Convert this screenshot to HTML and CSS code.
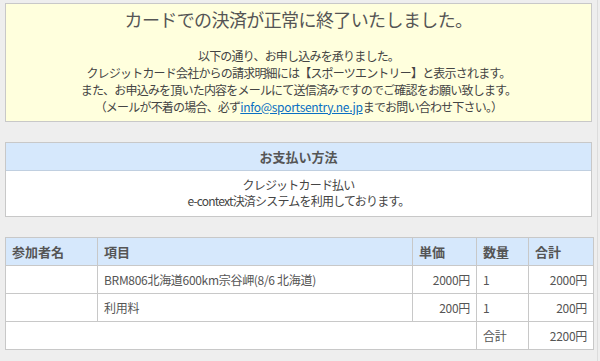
FILE: index.html
```html
<!DOCTYPE html>
<html lang="ja">
<head>
<meta charset="UTF-8">
<title>決済完了</title>
<link rel="stylesheet" href="styles.css">
</head>
<body>
<div class="page">
    <div class="notice">
        <h1>カードでの決済が正常に終了いたしました。</h1>
        <p>
            以下の通り、お申し込みを承りました。<br>
            クレジットカード会社からの請求明細には【スポーツエントリー】と表示されます。<br>
            また、お申込みを頂いた内容をメールにて送信済みですのでご確認をお願い致します。<br>
            （メールが不着の場合、必ず<a href="#">info@sportsentry.ne.jp</a>までお問い合わせ下さい。）
        </p>
    </div>

    <div class="pay">
        <div class="pay-head">お支払い方法</div>
        <div class="pay-body">
            クレジットカード払い<br>
            e-context決済システムを利用しております。
        </div>
    </div>

    <table class="list">
        <tr>
            <th class="c-name">参加者名</th>
            <th class="c-item">項目</th>
            <th class="c-price">単価</th>
            <th class="c-qty">数量</th>
            <th class="c-sum">合計</th>
        </tr>
        <tr>
            <td></td>
            <td>BRM806北海道600km宗谷岬(8/6 北海道)</td>
            <td class="num">2000円</td>
            <td>1</td>
            <td class="num">2000円</td>
        </tr>
        <tr>
            <td></td>
            <td>利用料</td>
            <td class="num">200円</td>
            <td>1</td>
            <td class="num">200円</td>
        </tr>
        <tr>
            <td colspan="3"></td>
            <td>合計</td>
            <td class="num">2200円</td>
        </tr>
    </table>
</div>
</body>
</html>
```

FILE: styles.css
```css
*{margin:0;padding:0;box-sizing:border-box;}
body
{
    background: #eeeeee;
    font-family: "Noto Sans CJK JP", "Liberation Sans", sans-serif;
    font-size: 12px;
    color: #444;
}
.page
{
    width: 598px;
    height: 361px;
    padding: 3px 5px 0 5px;
    border-right: 1px solid #dcdcdc;
}
.notice
{
    background: #ffffdd;
    border: 1px solid #c8c8c8;
    text-align: center;
    padding-bottom: 6px;
}
.notice h1
{
    font-size: 18px;
    font-weight: normal;
    line-height: 30px;
    color: #555;
    letter-spacing: -0.6px;
}
.notice p
{
    margin-top: 13px;
    line-height: 17px;
    letter-spacing: -0.8px;
}
.notice a
{
    color: #0a6fc2;
    letter-spacing: -0.3px;
}
.pay
{
    margin-top: 20px;
    border: 1px solid #c8c8c8;
    background: #fff;
    text-align: center;
}
.pay-head
{
    background: #d6e8fc;
    border-bottom: 1px solid #c0cfe0;
    height: 28px;
    line-height: 27px;
    font-weight: bold;
    font-size: 13px;
    color: #555;
}
.pay-body
{
    padding: 6px 0 7px 0;
    line-height: 16px;
    letter-spacing: -0.8px;
}
.list
{
    margin-top: 20px;
    width: 588px;
    border-collapse: collapse;
    background: #fff;
    table-layout: fixed;
}
.list th, .list td
{
    border: 1px solid #c8c8c8;
    height: 28px;
    padding: 0 6px;
    text-align: left;
    color: #555;
}
.list th
{
    background: #d6e8fc;
    font-size: 13px;
    font-weight: bold;
}
.list td
{
    letter-spacing: -0.3px;
}
.list .num
{
    text-align: right;
}
.c-name{width: 92px;}
.c-item{width: 315px;}
.c-price{width: 64px;}
.c-qty{width: 52px;}
.c-sum{width: 65px;}
```
